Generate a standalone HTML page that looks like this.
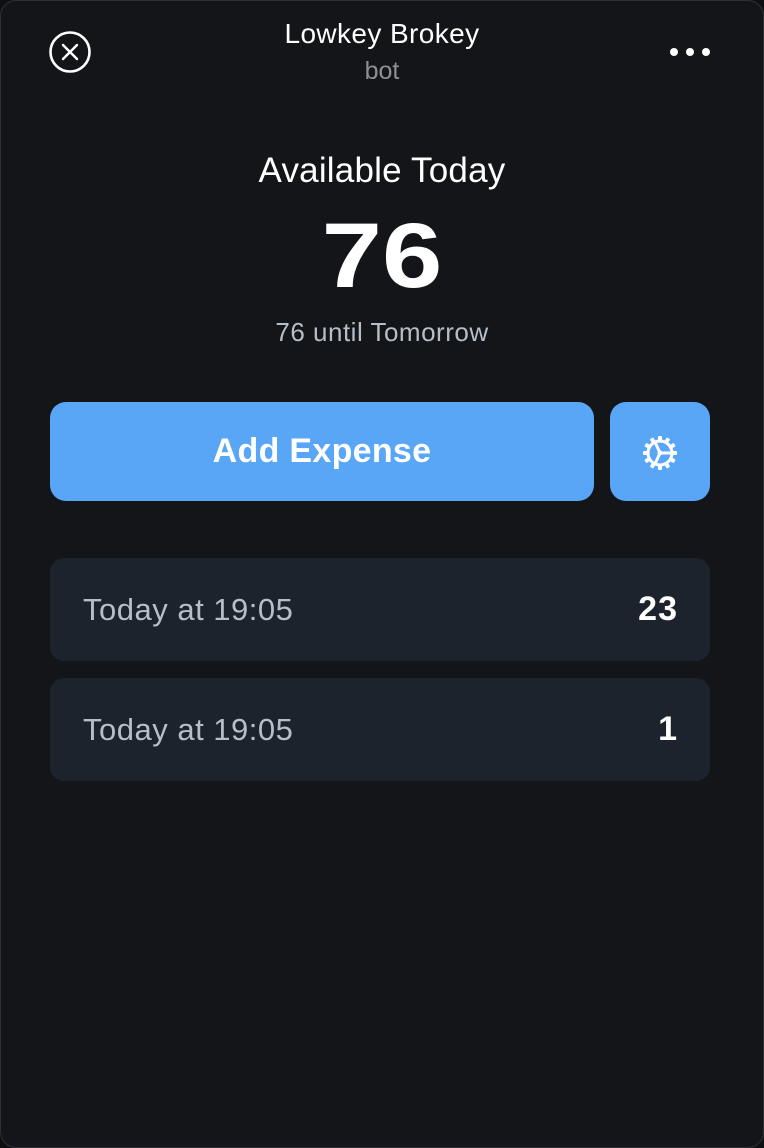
<!DOCTYPE html>
<html><head><style>
html,body{margin:0;padding:0;background:#0e0f11;}
body{width:764px;height:1148px;position:relative;overflow:hidden;font-family:"Liberation Sans",sans-serif;}
.win{position:absolute;left:0;top:0;width:762px;height:1146px;border:1px solid #2c3138;border-radius:16px;background:#141518;}
.t{position:absolute;left:0;width:764px;text-align:center;color:#fff;}
.btn{position:absolute;background:#58a6f5;border-radius:16px;}
.card{position:absolute;left:50px;width:660px;height:103px;background:#1c232d;border-radius:14px;}
.card .l{position:absolute;left:33px;top:34px;font-size:31px;color:#b6bec8;letter-spacing:0.5px;}
.card .r{position:absolute;right:33px;top:32px;font-size:34px;font-weight:bold;color:#fff;letter-spacing:1px;margin-right:-1px;}
</style></head><body>
<div class="win"></div>
<svg style="position:absolute;left:48px;top:30px" width="44" height="44" viewBox="0 0 44 44"><circle cx="22" cy="22" r="19.5" fill="none" stroke="#fff" stroke-width="2.6"/><path d="M15 15L29 29M29 15L15 29" stroke="#fff" stroke-width="2.4" stroke-linecap="round"/></svg>
<div class="t" style="top:18px;font-size:28px;letter-spacing:0.4px;">Lowkey Brokey</div>
<div class="t" style="top:57px;font-size:25px;color:#8d8f93;">bot</div>
<svg style="position:absolute;left:668px;top:44px" width="44" height="16"><circle cx="6" cy="8" r="4" fill="#fff"/><circle cx="22" cy="8" r="4" fill="#fff"/><circle cx="38" cy="8" r="4" fill="#fff"/></svg>
<div class="t" style="top:151px;font-size:35px;letter-spacing:0.2px;">Available Today</div>
<div class="t" style="top:204px;font-size:92px;font-weight:bold;transform:scaleX(1.18);">76</div>
<div class="t" style="top:317px;font-size:26px;color:#b6bec8;letter-spacing:0.5px;">76 until Tomorrow</div>
<div class="btn" style="left:50px;top:402px;width:544px;height:99px;"><div style="text-align:center;line-height:99px;color:#fff;font-size:34px;font-weight:bold;letter-spacing:0.3px;">Add Expense</div></div>
<div class="btn" style="left:610px;top:402px;width:100px;height:99px;">
<svg style="position:absolute;left:30px;top:31px" width="40" height="40" viewBox="-20 -20 40 40">
<g fill="#fff"><g id="tt"><rect x="-2" y="-17" width="4" height="5" rx="1"/></g>
<use href="#tt" transform="rotate(30)"/><use href="#tt" transform="rotate(60)"/><use href="#tt" transform="rotate(90)"/><use href="#tt" transform="rotate(120)"/><use href="#tt" transform="rotate(150)"/><use href="#tt" transform="rotate(180)"/><use href="#tt" transform="rotate(210)"/><use href="#tt" transform="rotate(240)"/><use href="#tt" transform="rotate(270)"/><use href="#tt" transform="rotate(300)"/><use href="#tt" transform="rotate(330)"/></g>
<circle r="12" fill="none" stroke="#fff" stroke-width="3"/>
<path d="M0 0L-5 -11M0 0L-5 11M0 0L12 0" stroke="#fff" stroke-width="3"/><circle r="2.5" fill="#fff"/></svg></div>
<div class="card" style="top:558px;"><div class="l">Today at 19:05</div><div class="r">23</div></div>
<div class="card" style="top:678px;"><div class="l">Today at 19:05</div><div class="r">1</div></div>
</body></html>
